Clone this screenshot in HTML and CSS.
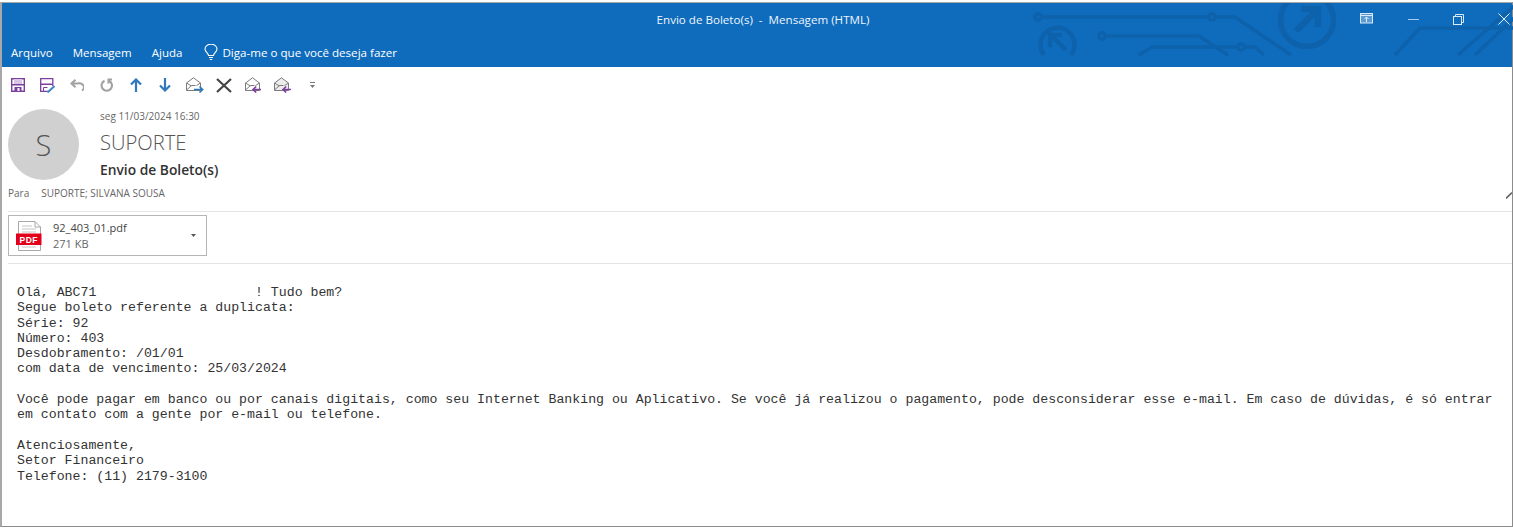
FILE: index.html
```html
<!DOCTYPE html>
<html lang="pt-BR">
<head>
<meta charset="utf-8">
<title>Envio de Boleto(s) - Mensagem (HTML)</title>
<link rel="stylesheet" href="styles.css">
</head>
<body>
<div class="window">
  <header class="ribbon">
    <svg class="circuit" width="1511" height="64" viewBox="0 0 1511 64" fill="none" stroke="#0e62ab" stroke-width="3.4">
      <g transform="translate(-2,-3)">
        <circle cx="1038" cy="17" r="3.2"/><path d="M1041 17H1209M1215 17H1235L1291 55"/><circle cx="1212" cy="17" r="3.2"/>
        <circle cx="1307" cy="20" r="26.5" stroke-width="5.5"/>
        <path d="M1296 31L1317 10M1301 9H1318V27" stroke-width="6.5"/>
        <path d="M1044 55A17 17 0 1 1 1071 55" stroke-width="4.5"/>
        <path d="M1066 50L1051 35M1050 47V35H1062" stroke-width="4.5"/>
        <circle cx="1102" cy="36" r="3.2"/><path d="M1105 36H1199L1228 55"/>
        <path d="M1139 55L1152 47H1238M1244 47H1255L1264 55"/><circle cx="1241" cy="47" r="3.2"/>
        <path d="M1395 55L1420 28H1514M1458 55L1514 6M1475 55L1514 18"/>
      </g>
    </svg>
    <div class="titlebar">
      <span class="title">Envio de Boleto(s)&nbsp; -&nbsp; Mensagem (HTML)</span>
      <div class="winctl">
        <svg width="14" height="12" viewBox="0 0 14 12" fill="none" stroke="#dbe9f6"><rect x=".5" y=".5" width="12" height="9.500" fill="#5b9bd4"/><path d="M.5 2.500h12M6.500 9V4M4.500 6l2-2 2 2"/></svg>
        <svg width="11" height="3" viewBox="0 0 11 3" stroke="#a9cbea"><path d="M0 1.500h11"/></svg>
        <svg width="11" height="11" viewBox="0 0 11 11" fill="none" stroke="#dbe9f6"><rect x=".5" y="2.500" width="8" height="8"/><path d="M2.500 2V.5h8v8H9"/></svg>
        <svg width="12" height="12" viewBox="0 0 12 12" stroke="#e6f0fa"><path d="M.5 .5l11 11M11.500 .5l-11 11"/></svg>
      </div>
    </div>
    <nav class="menubar">
      <span>Arquivo</span><span>Mensagem</span><span>Ajuda</span>
      <span class="tell">
        <svg width="14" height="17" viewBox="0 0 14 17" fill="none" stroke="#fff" stroke-width="1.100"><path d="M4.500 11.500C4.500 9 1 8 1 5a6 4.800 0 0 1 12 0c0 3-3.500 4-3.500 6.500z"/><path d="M5 13.500h4M5.800 15.500h2.400"/></svg>
        Diga-me o que você deseja fazer
      </span>
    </nav>
  </header>

  <div class="qat">
    <span class="qi"><svg width="14" height="14" viewBox="0 0 14 14"><path d="M.7 .7h12.600v12.600H.7z" fill="#fff" stroke="#7b3f9e" stroke-width="1.400"/><path d="M3 1h8v5H3z" fill="#d9c6e6"/><path d="M1 6h12v1.500H1zM3.500 9h7v4h-7z" fill="#7b3f9e"/><path d="M6.500 10h2v3h-2z" fill="#fff"/></svg></span>
    <span class="qi"><svg width="15" height="15" viewBox="0 0 15 15" fill="none"><path d="M12.800 8V.7H.7v12.600H8" stroke="#7b3f9e" stroke-width="1.300"/><path d="M1 5.500h11.500V7H1z" fill="#7b3f9e"/><path d="M3.500 13v-3.500h4" stroke="#7b3f9e"/><path d="M7.500 14.500l7-6.500" stroke="#3f86c6" stroke-width="2"/></svg></span>
    <span class="qi"><svg width="14" height="13" viewBox="0 0 14 13" fill="none" stroke="#a2a2a2" stroke-width="2"><path d="M1.500 4.500h6a5 4 0 0 1 4.500 7"/><path d="M5.500 .8L1.500 4.500l4 3.700"/></svg></span>
    <span class="qi"><svg width="13" height="14" viewBox="0 0 13 14" fill="none" stroke="#a2a2a2" stroke-width="2.100"><path d="M4.500 2.800a5.200 5.200 0 1 0 4.500 0"/><path d="M12 1.500H8.500v4"/></svg></span>
    <span class="qi"><svg width="12" height="14" viewBox="0 0 12 14" fill="none" stroke="#2f78bd" stroke-width="2.200"><path d="M6 14V2M1 6.500L6 1.500l5 5"/></svg></span>
    <span class="qi"><svg width="12" height="14" viewBox="0 0 12 14" fill="none" stroke="#2f78bd" stroke-width="2.200"><path d="M6 0V12M1 7.500L6 12.500l5-5"/></svg></span>
    <span class="qi"><svg width="18" height="16" viewBox="0 0 18 16" fill="none"><path d="M.5 6L7.500 .8 14.500 6v7.500H.5zM.5 13l5-4.500h4" stroke="#7c7c7c"/><path d="M.5 6l5 3M14.500 6l-4 2.500" stroke="#7c7c7c"/><path d="M8 12.500h8.500M13.500 9.500l3.200 3-3.200 3" stroke="#2f78bd" stroke-width="1.600"/></svg></span>
    <span class="qi"><svg width="16" height="15" viewBox="0 0 16 15" stroke="#444" stroke-width="2.200"><path d="M1 1l14 13M15 1L1 14"/></svg></span>
    <span class="qi"><svg width="17" height="16" viewBox="0 0 17 16" fill="none"><path d="M.5 6L7.500 .8 14.500 6v7.500H.5zM.5 6l5 3M14.500 6l-4 2.500M.5 13l5-4.500h4" stroke="#7c7c7c"/><path d="M16 12.500H8M11.200 9.500L8 12.500l3.200 3" stroke="#7b3f9e" stroke-width="1.600"/></svg></span>
    <span class="qi"><svg width="18" height="16" viewBox="0 0 18 16" fill="none"><path d="M.5 6L7.500 .8 14.500 6v7.500H.5z" stroke="#7c7c7c" fill="#ececec"/><path d="M.5 6l5 3M14.500 6l-4 2.500M.5 13l5-4.500h4" stroke="#7c7c7c"/><path d="M17 12.500H9M12.200 9.500L9 12.500l3.200 3" stroke="#7b3f9e" stroke-width="1.600"/></svg></span>
    <span class="qi"><svg width="5" height="6" viewBox="0 0 5 6"><path d="M0 .5h5" stroke="#777"/><path d="M0 3h5L2.500 6z" fill="#777"/></svg></span>
  </div>

  <section class="head">
    <div class="avatar">S</div>
    <div class="meta">
      <div class="date">seg 11/03/2024 16:30</div>
      <div class="sender">SUPORTE</div>
      <div class="subject">Envio de Boleto(s)</div>
    </div>
  </section>
  <div class="to"><span class="to-label">Para</span><span>SUPORTE; SILVANA SOUSA</span></div>

  <section class="attach-row">
    <div class="attach">
      <svg width="27" height="30" viewBox="0 0 27 30">
        <path d="M2.500 .5H19L24.500 6V29.500H2.500z" fill="#fff" stroke="#a8a8a8"/>
        <path d="M19 .5V6H24.500" fill="none" stroke="#a8a8a8"/>
        <path d="M6 5h10M6 8h14M6 11h14M6 26h14" stroke="#c4c4c4"/>
        <rect y="12.500" width="25.500" height="11.500" fill="#e3001b"/>
        <text x="12.800" y="22" class="pdf">PDF</text>
      </svg>
      <div class="file"><div class="fname">92_403_01.pdf</div><div class="fsize">271 KB</div></div>
      <svg class="caret" width="5" height="3" viewBox="0 0 5 3"><path d="M0 0h5L2.500 3z" fill="#555"/></svg>
    </div>
  </section>

  <main class="body">
    <p>Olá, ABC71                    ! Tudo bem?
Segue boleto referente a duplicata:
Série: 92
Número: 403
Desdobramento: /01/01
com data de vencimento: 25/03/2024

Você pode pagar em banco ou por canais digitais, como seu Internet Banking ou Aplicativo. Se você já realizou o pagamento, pode desconsiderar esse e-mail. Em caso de dúvidas, é só entrar em contato com a gente por e-mail ou telefone.

Atenciosamente,
Setor Financeiro
Telefone: (11) 2179-3100</p>
  </main>
  <svg class="grip" width="6" height="7" viewBox="0 0 6 7"><path d="M0 6.500L6 .5" stroke="#666" stroke-width="1.600"/></svg>
</div>
</body>
</html>
```
FILE: styles.css
```css
html, body { margin: 0; padding: 0; background: #fff; }
body { font-family: "Open Sans", "Noto Sans", sans-serif; color: #444; overflow: hidden; }
.window {
  position: relative;
  box-sizing: border-box;
  width: 1513px;
  height: 525px;
  margin: 2px 0 0;
  border: 1px solid #8c8c8c;
  border-left: 2px solid #a8a8a8;
  border-top-color: #a8a8a8;
  display: flex;
  flex-direction: column;
}
.ribbon { position: relative; height: 64px; flex: none; background: #0f6cbd; color: #fff; }
.circuit { position: absolute; left: 0; top: 0; clip-path: inset(0 0 10px 0); }
.titlebar { position: relative; height: 35px; display: flex; justify-content: center; align-items: center; }
.title { font-size: 11.600px; color: #eef5fb; margin-left: 12px; margin-top: -3px; }
.winctl { position: absolute; right: 2px; top: 10px; display: flex; align-items: center; gap: 34px; height: 12px; }
.menubar { position: relative; display: flex; align-items: center; height: 29px; padding-left: 9px; font-size: 11.500px; gap: 20px; }
.tell { display: flex; align-items: center; gap: 4px; margin-left: 2px; font-size: 11.600px; }
.qat { display: flex; align-items: center; height: 36px; padding-left: 1px; flex: none; }
.qi { width: 29.500px; flex: none; display: flex; justify-content: center; align-items: center; }
.head { display: flex; flex: none; padding-left: 6px; height: 72px; align-items: flex-start; margin-top: 6px; }
.avatar {
  width: 71px; height: 71px; border-radius: 50%; background: #d0d0d0; color: #555;
  font-size: 29px; display: flex; align-items: center; justify-content: center; font-weight: 300; flex: none;
}
.meta { margin-left: 21px; }
.date { font-size: 10px; line-height: 14px; color: #666; }
.sender { font-size: 20.200px; line-height: 27px; color: #555; margin-top: 6px; font-weight: 300; }
.subject { font-size: 13.800px; line-height: 18px; color: #333; font-weight: 600; margin-top: 5px; }
.to { display: flex; flex: none; gap: 12px; height: 25px; padding-left: 6px; font-size: 10px; line-height: 14px; color: #666; margin-top: 5px; }
.attach-row { flex: none; margin-left: 6px; border-top: 1px solid #e4e4e4; border-bottom: 1px solid #e4e4e4; height: 53px; padding-top: 3px; box-sizing: border-box; }
.attach { box-sizing: border-box; width: 199px; height: 41px; border: 1px solid #b5b5b5; display: flex; align-items: center; padding-left: 7px; }
.file { margin-left: 10px; font-size: 11px; line-height: 16px; color: #444; flex: 1; }
.fsize { color: #666; }
.caret { margin-right: 10px; }
.pdf { font: 700 8.500px "Liberation Sans", sans-serif; fill: #fff; text-anchor: middle; letter-spacing: .5px; }
.body { flex: 1; padding: 0 15px; }
.body p { margin: 21px 0 0; font: 13.230px/15.300px "Liberation Mono", monospace; color: #333; white-space: pre-wrap; }
.grip { position: absolute; right: 0; top: 189px; }
```
